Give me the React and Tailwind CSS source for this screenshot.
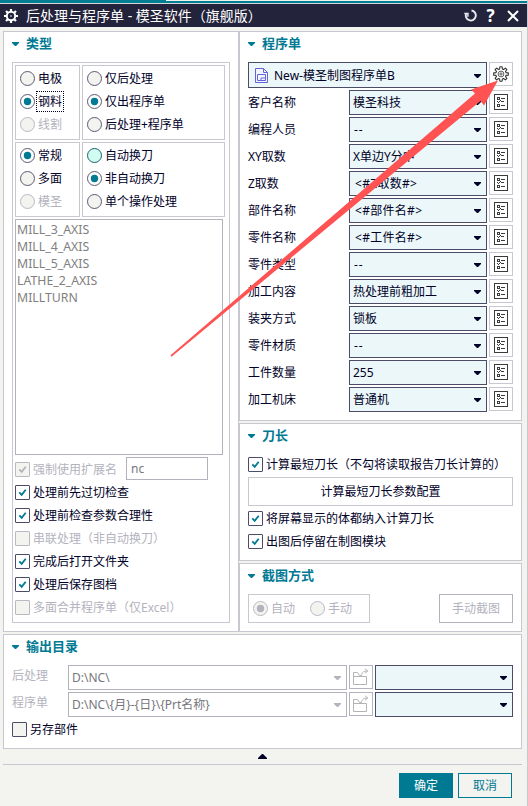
import React, { useState } from 'react'
import clsx from 'clsx'

const FIELDS = [
  { label: '客户名称', value: '模圣科技' },
  { label: '编程人员', value: '--' },
  { label: 'XY取数', value: 'X单边Y分中' },
  { label: 'Z取数', value: '<#Z取数#>' },
  { label: '部件名称', value: '<#部件名#>' },
  { label: '零件名称', value: '<#工件名#>' },
  { label: '零件类型', value: '--' },
  { label: '加工内容', value: '热处理前粗加工' },
  { label: '装夹方式', value: '锁板' },
  { label: '零件材质', value: '--' },
  { label: '工件数量', value: '255' },
  { label: '加工机床', value: '普通机' },
]

const POSTS = ['MILL_3_AXIS', 'MILL_4_AXIS', 'MILL_5_AXIS', 'LATHE_2_AXIS', 'MILLTURN']

function Caret({ className }) {
  return (
    <svg width="7" height="4" viewBox="0 0 7 4" className={clsx('shrink-0', className)}>
      <path d="M0 0h7v1L4 4H3L0 1z" fill="currentColor" />
    </svg>
  )
}

function Section({ title, className, children }) {
  return (
    <section className={clsx('border border-[#c8c8d0] bg-white px-2', className)}>
      <h2 className="flex h-[23px] items-center gap-[7px] text-[13px] leading-none font-bold text-[#007993]">
        <Caret />
        {title}
      </h2>
      {children}
    </section>
  )
}

function Radio({ label, checked, disabled, hot, focused, onClick }) {
  return (
    <button
      className={clsx('flex h-[23px] items-center gap-px whitespace-nowrap', disabled && 'text-[#b3b3be]')}
      disabled={disabled}
      onClick={onClick}
    >
      <svg width="15" height="15" viewBox="0 0 15 15" className="shrink-0">
        <circle
          cx="7.5"
          cy="7.5"
          r="7"
          fill={hot ? '#d0fcf2' : checked && !disabled ? '#fff' : '#f3f3ef'}
          stroke={disabled ? '#b9b9c4' : hot ? '#196269' : '#5a5a73'}
        />
        {checked && <circle cx="7.5" cy="7.5" r="3.7" fill={disabled ? '#b3b3be' : '#007993'} />}
      </svg>
      <span className={clsx('border px-px py-[2px] leading-[15px]', focused ? 'border-dotted border-[#000028]' : 'border-transparent')}>
        {label}
      </span>
    </button>
  )
}

function Check({ label, checked, disabled, className }) {
  return (
    <label className={clsx('flex h-[23px] items-center gap-[3px] whitespace-nowrap', disabled && 'text-[#b3b3be]', className)}>
      <span
        className={clsx(
          'flex size-[15px] shrink-0 items-center justify-center rounded-[1px] border',
          disabled ? 'border-[#b9b9c4]' : 'border-[#4c4c68]',
          checked && !disabled ? 'bg-white text-[#007993]' : 'bg-[#f3f3ef]',
        )}
      >
        {checked && (
          <svg width="9" height="9" viewBox="0 0 9 9">
            <path d="M1.3 4.3 3.7 6.8 7.7 1.7" fill="none" stroke="currentColor" strokeWidth="1.8" />
          </svg>
        )}
      </span>
      <span className="leading-[15px]">{label}</span>
    </label>
  )
}

function Combo({ value, disabled, icon, className }) {
  return (
    <div
      className={clsx(
        'flex h-[25px] items-center border pr-[5px] pl-[3px]',
        disabled ? 'border-[#b3b3be] bg-white text-[#76767c]' : 'border-[#4c4c68] bg-[#ebf7f8]',
        className,
      )}
    >
      {icon}
      <span
        className={clsx(
          'grow leading-[15px] whitespace-pre',
          value === '--' && 'pl-px tracking-[1px]',
          value.startsWith('<') && 'pl-[2px] tracking-[0.3px]',
        )}
      >
        {value}
      </span>
      <Caret className={clsx('mt-px', disabled && 'text-[#b3b3be]')} />
    </div>
  )
}

function IconButton({ disabled, children }) {
  return (
    <button
      className={clsx(
        'flex size-6 shrink-0 items-center justify-center border bg-white',
        disabled ? 'border-[#b3b3be]' : 'border-[#c8c8d0]',
      )}
    >
      {children}
    </button>
  )
}

function GearIcon() {
  return (
    <svg width="16" height="16" viewBox="-8 -8 16 16" fill="none" stroke="#333">
      <path
        d="M-1.400-5-1.100-7.300H1.100L1.400-5 2.500-4.500 4.400-5.900 5.900-4.400 4.500-2.500 5-1.400 7.300-1.100V1.100L5 1.400 4.500 2.500 5.900 4.400 4.400 5.900 2.500 4.500 1.400 5 1.100 7.300H-1.100L-1.400 5-2.500 4.500-4.400 5.900-5.900 4.400-4.500 2.500-5 1.400-7.300 1.100V-1.100L-5-1.400-4.500-2.500-5.900-4.400-4.400-5.900-2.500-4.500z"
        strokeWidth="1.100"
        strokeLinejoin="round"
      />
      <circle r="2.900" strokeWidth=".8" />
      <circle r="1.100" strokeWidth=".8" />
    </svg>
  )
}

function ListIcon() {
  return (
    <svg width="14" height="16" viewBox="0 0 14 16" fill="none" stroke="#3b3b3b" shapeRendering="crispEdges">
      <rect x=".5" y=".5" width="13" height="15" />
      <rect x="3.5" y="3.5" width="2" height="2" />
      <rect x="3.5" y="10.5" width="2" height="2" />
      <path d="M7 4.5h4M7 7.5h3M7 11.5h4" />
      <path d="M3 7.5h1M4 8.5h1M5 7.5h1M6 6.5h1" />
    </svg>
  )
}

function FolderIcon() {
  return (
    <svg width="18" height="18" viewBox="0 0 18 18" fill="none" stroke="#b4b4b4">
      <path d="M1.5 16.5v-12h4l2 3h2M1.5 8.5h13v8h-13" />
      <path d="M9.5 7.5c.3-3 2-4.500 6-4.500M13 .8 15.800 3 13 5.300" />
    </svg>
  )
}

function SheetIcon() {
  return (
    <svg width="13" height="15" viewBox="0 0 13 15" className="mr-[6px] ml-[3px] shrink-0" fill="none" stroke="#6464d8">
      <path d="M.5.500h8l4 4v10H.5z" fill="#f2f4ff" />
      <path d="M8.500.500v4h4" />
      <path d="M2.500 6.500h8v6h-8zM6 12.500v-2.500h4.500" />
    </svg>
  )
}

function TitleGear() {
  return (
    <svg width="14" height="14" viewBox="0 0 14 14" fill="none" stroke="#fff">
      <circle cx="7" cy="7" r="4.200" strokeWidth="2" />
      <path
        d="M7 0v2.500M7 11.500v2.500M0 7h2.500M11.500 7h2.500M2 2l1.800 1.800M10.200 10.200 12 12M12 2l-1.800 1.800M3.800 10.200 2 12"
        strokeWidth="2.200"
      />
      <circle cx="7" cy="7" r=".8" fill="#fff" stroke="none" />
    </svg>
  )
}

function TitleBar() {
  return (
    <header>
      <div className="h-[3px] bg-[#007f94]">
        <div className="ml-[166px] h-px bg-[#f3f3ef]" />
      </div>
      <div className="h-px bg-[#d4d6dc]" />
      <div className="flex h-[23px] items-center bg-[#23233c] pr-2 pl-1 text-white">
        <TitleGear />
        <span className="ml-2 grow text-[14px] leading-none">后处理与程序单 - 模圣软件（旗舰版）</span>
        <svg width="13" height="13" viewBox="0 0 13 13" fill="none" stroke="#e8e8ee" strokeWidth="1.900">
          <path d="M7.500 1.500a5 5 0 1 1-5.300 3" />
          <path d="M.3 4.500h3.600v3.200" strokeWidth="1.500" />
        </svg>
        <span className="mr-3 ml-[9px] w-[9px] text-center text-[17px] leading-none font-bold">?</span>
        <svg width="12" height="12" viewBox="0 0 12 12" stroke="#fff" strokeWidth="2">
          <path d="M1 1l10 10M11 1 1 11" />
        </svg>
      </div>
    </header>
  )
}

function RadioBox({ options, value, onChange, className }) {
  return (
    <div className={clsx('h-[75px] border border-[#c8c8d0] pt-px pl-1', className)}>
      {options.map((o) => (
        <Radio key={o.label} {...o} checked={o.label === value} onClick={() => onChange(o.label)} />
      ))}
    </div>
  )
}

function TypePanel() {
  const [kind, setKind] = useState('钢料')
  const [output, setOutput] = useState('仅出程序单')
  const [mode, setMode] = useState('常规')
  const [toolChange, setToolChange] = useState('非自动换刀')

  return (
    <Section title="类型" className="h-[601px] w-[236px]">
      <div className="mt-[7px] h-[561px] w-[218px] border border-[#c8c8d0] p-[2px]">
        <div className="grid grid-cols-[65px_143px] gap-[2px]">
          <RadioBox
            value={kind}
            onChange={setKind}
            options={[{ label: '电极' }, { label: '钢料', focused: true }, { label: '线割', disabled: true }]}
          />
          <RadioBox
            value={output}
            onChange={setOutput}
            options={[{ label: '仅后处理' }, { label: '仅出程序单' }, { label: '后处理+程序单' }]}
          />
          <RadioBox
            value={mode}
            onChange={setMode}
            options={[{ label: '常规' }, { label: '多面' }, { label: '模圣', disabled: true }]}
          />
          <RadioBox
            value={toolChange}
            onChange={setToolChange}
            options={[{ label: '自动换刀', hot: true }, { label: '非自动换刀' }, { label: '单个操作处理' }]}
          />
        </div>
        <ul className="mt-[2px] h-[236px] w-[208px] border border-[#b3b3be] pt-px pl-px text-[#808080]">
          {POSTS.map((p) => (
            <li key={p} className="h-[17px] text-[12.300px] leading-[17px]">{p}</li>
          ))}
        </ul>
        <div className="mt-[2px] flex h-[24px] items-start">
          <Check label="强制使用扩展名" checked disabled className="mt-px w-[111px]" />
          <div className="h-[23px] w-[82px] border border-[#b3b3be] pl-1 leading-[21px] text-[#76767c]">nc</div>
        </div>
        <Check label="处理前先过切检查" checked />
        <Check label="处理前检查参数合理性" checked />
        <Check label="串联处理（非自动换刀）" disabled />
        <Check label="完成后打开文件夹" checked />
        <Check label="处理后保存图档" checked />
        <Check label="多面合并程序单（仅Excel）" disabled />
      </div>
    </Section>
  )
}

function SheetPanel() {
  return (
    <Section title="程序单" className="h-[390px]">
      <div className="mt-[7px] mb-[2px] flex gap-[2px]">
        <Combo value="New-模圣制图程序单B" icon={<SheetIcon />} className="h-[26px] w-[239px]" />
        <IconButton><GearIcon /></IconButton>
      </div>
      <div className="flex flex-col gap-[2px]">
        {FIELDS.map((f) => (
          <div key={f.label} className="flex gap-[2px]">
            <span className="w-[99px] pt-[5px] leading-[15px]">{f.label}</span>
            <Combo value={f.value} className="w-[138px]" />
            <IconButton><ListIcon /></IconButton>
          </div>
        ))}
      </div>
    </Section>
  )
}

function ToolLengthPanel() {
  return (
    <Section title="刀长" className="mt-[2px] h-[138px]">
      <Check label="计算最短刀长（不勾将读取报告刀长计算的）" checked className="mt-[6px]" />
      <button className="mt-px mb-px block h-[29px] w-[265px] border border-[#c8c8d0]">计算最短刀长参数配置</button>
      <Check label="将屏幕显示的体都纳入计算刀长" checked />
      <Check label="出图后停留在制图模块" checked />
    </Section>
  )
}

function CapturePanel() {
  return (
    <Section title="截图方式" className="mt-[2px] h-[69px]">
      <div className="mt-[7px] flex justify-between">
        <div className="flex h-[29px] w-[122px] gap-[13px] border border-[#c8c8d0] pt-[2px] pl-1">
          <Radio label="自动" checked disabled />
          <Radio label="手动" disabled />
        </div>
        <button disabled className="h-[29px] w-[74px] border border-[#b3b3be] text-[#b3b3be]">手动截图</button>
      </div>
    </Section>
  )
}

function OutputPanel() {
  return (
    <Section title="输出目录" className="mt-[2px] mr-[5px] ml-[3px] h-[115px]">
      <div className="mt-[7px] flex flex-col gap-[2px]">
        {[
          ['后处理', 'D:\\NC\\'],
          ['程序单', 'D:\\NC\\{月}-{日}\\{Prt名称}'],
        ].map(([label, path]) => (
          <div key={label} className="flex gap-[2px]">
            <span className="w-[54px] shrink-0 pt-[3px] leading-[15px] text-[#b3b3be]">{label}</span>
            <Combo value={path} disabled className="w-[279px] shrink-0" />
            <IconButton disabled><FolderIcon /></IconButton>
            <Combo value="" className="w-[138px] shrink-0" />
          </div>
        ))}
      </div>
      <Check label="另存部件" className="mt-px" />
    </Section>
  )
}

// callout arrow pointing at the settings button
function Arrow() {
  return (
    <svg className="pointer-events-none absolute inset-0" width="528" height="806" viewBox="0 0 528 806">
      <path d="M170.500 355.300 475 93.500 471 89.500 498 80.500 484 105.500 480.500 101 171.500 356.700z" fill="#ff5252" />
    </svg>
  )
}

export default function App() {
  return (
    <div className="relative h-[806px] w-[528px] overflow-hidden border-r border-[#c8c8d0] bg-[#f3f3ef] font-['Noto_Sans','Noto_Sans_CJK_SC',sans-serif] text-[12px] text-[#000028]">
      <TitleBar />
      <main>
        <div className="mt-1 ml-[3px] flex">
          <TypePanel />
          <div className="w-[283px]">
            <SheetPanel />
            <ToolLengthPanel />
            <CapturePanel />
          </div>
        </div>
        <OutputPanel />
      </main>
      <footer className="mr-[5px] ml-[3px]">
        <div className="flex h-[16px] items-center justify-center border-b border-[#c8c8d0]">
          <svg width="9" height="5" viewBox="0 0 9 5"><path d="M4 0h1l4 4v1H0V4z" fill="#000028" /></svg>
        </div>
        <div className="mt-2 mr-[10px] flex justify-end gap-[5px]">
          <button className="h-[25px] w-[54px] bg-[#007993] text-white">确定</button>
          <button className="h-[25px] w-[54px] border border-[#007993] text-[#007993]">取消</button>
        </div>
      </footer>
      <Arrow />
    </div>
  )
}
